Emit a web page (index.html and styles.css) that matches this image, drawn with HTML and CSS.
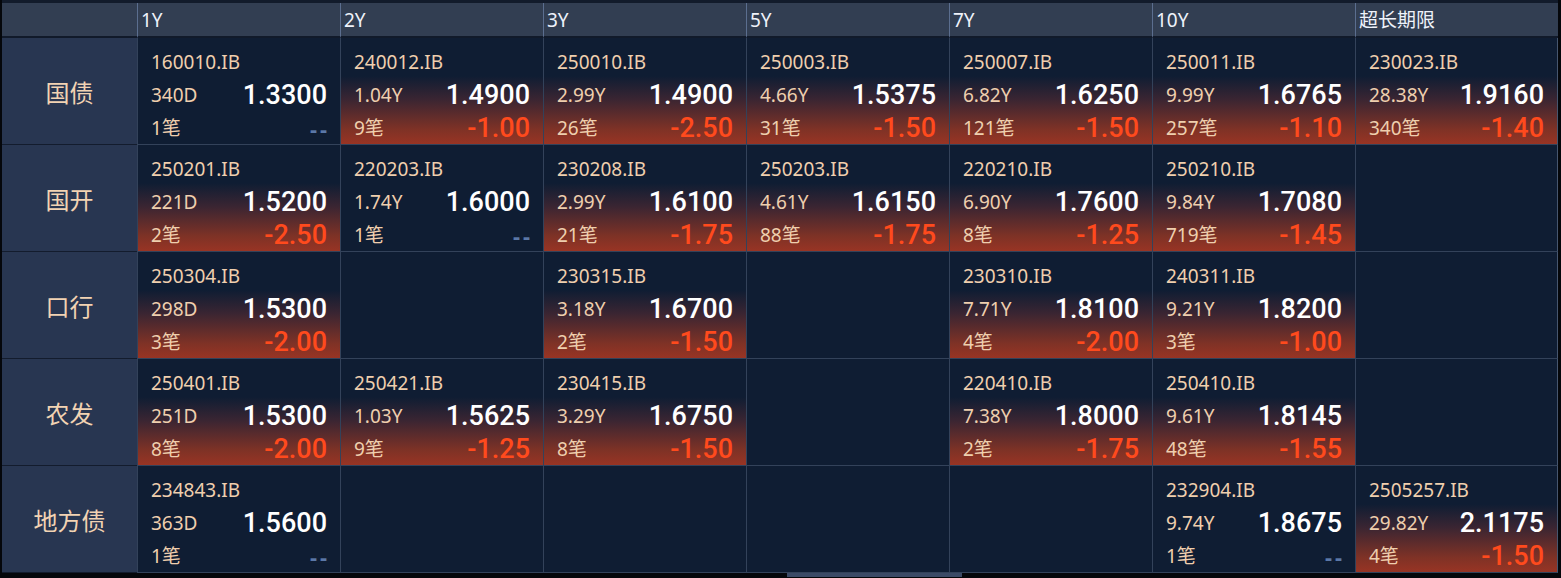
FILE: index.html
```html
<!DOCTYPE html>
<html lang="zh-CN">
<head>
<meta charset="utf-8">
<title>利率债行情</title>
<link rel="stylesheet" href="styles.css">
</head>
<body>
<div class="frame">
  <div class="board">
    <div class="corner"></div>
    <div class="hcell">1Y</div>
    <div class="hcell">2Y</div>
    <div class="hcell">3Y</div>
    <div class="hcell">5Y</div>
    <div class="hcell">7Y</div>
    <div class="hcell">10Y</div>
    <div class="hcell">超长期限</div>

    <div class="label">国债</div>
    <div class="cell"><div class="ln code">160010.IB</div><div class="ln"><span class="term">340D</span><span class="yld">1.3300</span></div><div class="ln"><span class="cnt">1笔</span><span class="none">--</span></div></div>
    <div class="cell down"><div class="ln code">240012.IB</div><div class="ln"><span class="term">1.04Y</span><span class="yld">1.4900</span></div><div class="ln"><span class="cnt">9笔</span><span class="chg">-1.00</span></div></div>
    <div class="cell down"><div class="ln code">250010.IB</div><div class="ln"><span class="term">2.99Y</span><span class="yld">1.4900</span></div><div class="ln"><span class="cnt">26笔</span><span class="chg">-2.50</span></div></div>
    <div class="cell down"><div class="ln code">250003.IB</div><div class="ln"><span class="term">4.66Y</span><span class="yld">1.5375</span></div><div class="ln"><span class="cnt">31笔</span><span class="chg">-1.50</span></div></div>
    <div class="cell down"><div class="ln code">250007.IB</div><div class="ln"><span class="term">6.82Y</span><span class="yld">1.6250</span></div><div class="ln"><span class="cnt">121笔</span><span class="chg">-1.50</span></div></div>
    <div class="cell down"><div class="ln code">250011.IB</div><div class="ln"><span class="term">9.99Y</span><span class="yld">1.6765</span></div><div class="ln"><span class="cnt">257笔</span><span class="chg">-1.10</span></div></div>
    <div class="cell down"><div class="ln code">230023.IB</div><div class="ln"><span class="term">28.38Y</span><span class="yld">1.9160</span></div><div class="ln"><span class="cnt">340笔</span><span class="chg">-1.40</span></div></div>

    <div class="label">国开</div>
    <div class="cell down"><div class="ln code">250201.IB</div><div class="ln"><span class="term">221D</span><span class="yld">1.5200</span></div><div class="ln"><span class="cnt">2笔</span><span class="chg">-2.50</span></div></div>
    <div class="cell"><div class="ln code">220203.IB</div><div class="ln"><span class="term">1.74Y</span><span class="yld">1.6000</span></div><div class="ln"><span class="cnt">1笔</span><span class="none">--</span></div></div>
    <div class="cell down"><div class="ln code">230208.IB</div><div class="ln"><span class="term">2.99Y</span><span class="yld">1.6100</span></div><div class="ln"><span class="cnt">21笔</span><span class="chg">-1.75</span></div></div>
    <div class="cell down"><div class="ln code">250203.IB</div><div class="ln"><span class="term">4.61Y</span><span class="yld">1.6150</span></div><div class="ln"><span class="cnt">88笔</span><span class="chg">-1.75</span></div></div>
    <div class="cell down"><div class="ln code">220210.IB</div><div class="ln"><span class="term">6.90Y</span><span class="yld">1.7600</span></div><div class="ln"><span class="cnt">8笔</span><span class="chg">-1.25</span></div></div>
    <div class="cell down"><div class="ln code">250210.IB</div><div class="ln"><span class="term">9.84Y</span><span class="yld">1.7080</span></div><div class="ln"><span class="cnt">719笔</span><span class="chg">-1.45</span></div></div>
    <div class="cell"></div>

    <div class="label">口行</div>
    <div class="cell down"><div class="ln code">250304.IB</div><div class="ln"><span class="term">298D</span><span class="yld">1.5300</span></div><div class="ln"><span class="cnt">3笔</span><span class="chg">-2.00</span></div></div>
    <div class="cell"></div>
    <div class="cell down"><div class="ln code">230315.IB</div><div class="ln"><span class="term">3.18Y</span><span class="yld">1.6700</span></div><div class="ln"><span class="cnt">2笔</span><span class="chg">-1.50</span></div></div>
    <div class="cell"></div>
    <div class="cell down"><div class="ln code">230310.IB</div><div class="ln"><span class="term">7.71Y</span><span class="yld">1.8100</span></div><div class="ln"><span class="cnt">4笔</span><span class="chg">-2.00</span></div></div>
    <div class="cell down"><div class="ln code">240311.IB</div><div class="ln"><span class="term">9.21Y</span><span class="yld">1.8200</span></div><div class="ln"><span class="cnt">3笔</span><span class="chg">-1.00</span></div></div>
    <div class="cell"></div>

    <div class="label">农发</div>
    <div class="cell down"><div class="ln code">250401.IB</div><div class="ln"><span class="term">251D</span><span class="yld">1.5300</span></div><div class="ln"><span class="cnt">8笔</span><span class="chg">-2.00</span></div></div>
    <div class="cell down"><div class="ln code">250421.IB</div><div class="ln"><span class="term">1.03Y</span><span class="yld">1.5625</span></div><div class="ln"><span class="cnt">9笔</span><span class="chg">-1.25</span></div></div>
    <div class="cell down"><div class="ln code">230415.IB</div><div class="ln"><span class="term">3.29Y</span><span class="yld">1.6750</span></div><div class="ln"><span class="cnt">8笔</span><span class="chg">-1.50</span></div></div>
    <div class="cell"></div>
    <div class="cell down"><div class="ln code">220410.IB</div><div class="ln"><span class="term">7.38Y</span><span class="yld">1.8000</span></div><div class="ln"><span class="cnt">2笔</span><span class="chg">-1.75</span></div></div>
    <div class="cell down"><div class="ln code">250410.IB</div><div class="ln"><span class="term">9.61Y</span><span class="yld">1.8145</span></div><div class="ln"><span class="cnt">48笔</span><span class="chg">-1.55</span></div></div>
    <div class="cell"></div>

    <div class="label">地方债</div>
    <div class="cell"><div class="ln code">234843.IB</div><div class="ln"><span class="term">363D</span><span class="yld">1.5600</span></div><div class="ln"><span class="cnt">1笔</span><span class="none">--</span></div></div>
    <div class="cell"></div>
    <div class="cell"></div>
    <div class="cell"></div>
    <div class="cell"></div>
    <div class="cell"><div class="ln code">232904.IB</div><div class="ln"><span class="term">9.74Y</span><span class="yld">1.8675</span></div><div class="ln"><span class="cnt">1笔</span><span class="none">--</span></div></div>
    <div class="cell down"><div class="ln code">2505257.IB</div><div class="ln"><span class="term">29.82Y</span><span class="yld">2.1175</span></div><div class="ln"><span class="cnt">4笔</span><span class="chg">-1.50</span></div></div>
  </div>
  <div class="hscroll"><div class="thumb"></div></div>
</div>
</body>
</html>
```
FILE: styles.css
```css
html, body {
  margin: 0;
  padding: 0;
  background: #05070b;
  height: 100%;
  overflow: hidden;
}

body {
  font-family: "Noto Sans", "Noto Sans CJK SC", sans-serif;
}

.frame {
  width: 1558px;
}

.board {
  display: grid;
  grid-template-columns: 135px repeat(7, 203px);
  grid-template-rows: 35px repeat(5, 107px);
  margin-left: 2px;
  width: 1556px;
  border-top: 3px solid #121b2b;
  background: #0f1d33;
}

.corner {
  background: #323e52;
  border-bottom: 2px solid #111a2a;
}

.hcell {
  box-sizing: border-box;
  background: #323e52;
  border-left: 1px solid #5b6e8f;
  border-bottom: 2px solid #111a2a;
  color: #eef2fa;
  font-size: 19px;
  line-height: 31px;
  padding: 2px 0 0 3px;
  white-space: nowrap;
}

.label {
  box-sizing: border-box;
  background: #283651;
  border-bottom: 1px solid #131c2d;
  color: #f2d3b3;
  font-size: 24px;
  display: flex;
  align-items: center;
  justify-content: center;
  font-family: "Noto Sans CJK SC", sans-serif;
}

.cell {
  box-sizing: border-box;
  background: #0f1d33;
  border-left: 1px solid #33425a;
  border-bottom: 1px solid #33425a;
  padding: 8px 13px 0 13px;
}

.cell:nth-child(8n) {
  border-right: 1px solid #46566f;
}

.cell.down {
  background: linear-gradient(to bottom, #0f1d33 0%, #0f1d33 36%, #3a2532 58%, #7e3226 86%, #983424 100%);
}

.ln {
  height: 33px;
  line-height: 33px;
  display: flex;
  align-items: center;
  justify-content: space-between;
  white-space: nowrap;
}

.ln span {
  line-height: 33px;
}

.code,
.term,
.cnt {
  color: #efcfae;
  font-size: 19px;
}

.yld {
  color: #ffffff;
  font-family: Roboto, "Noto Sans", sans-serif;
  font-size: 27px;
  font-weight: 500;
}

.chg {
  color: #ff4a1d;
  font-family: Roboto, "Noto Sans", sans-serif;
  font-size: 27px;
  font-weight: 500;
}

.none {
  color: #5b78a8;
  font-size: 22px;
  font-weight: 700;
  letter-spacing: 3px;
  margin-right: -3px;
}

.hscroll {
  height: 4px;
  background: #05070b;
}

.thumb {
  width: 175px;
  height: 4px;
  margin-left: 787px;
  background: #3b4a66;
}
```
